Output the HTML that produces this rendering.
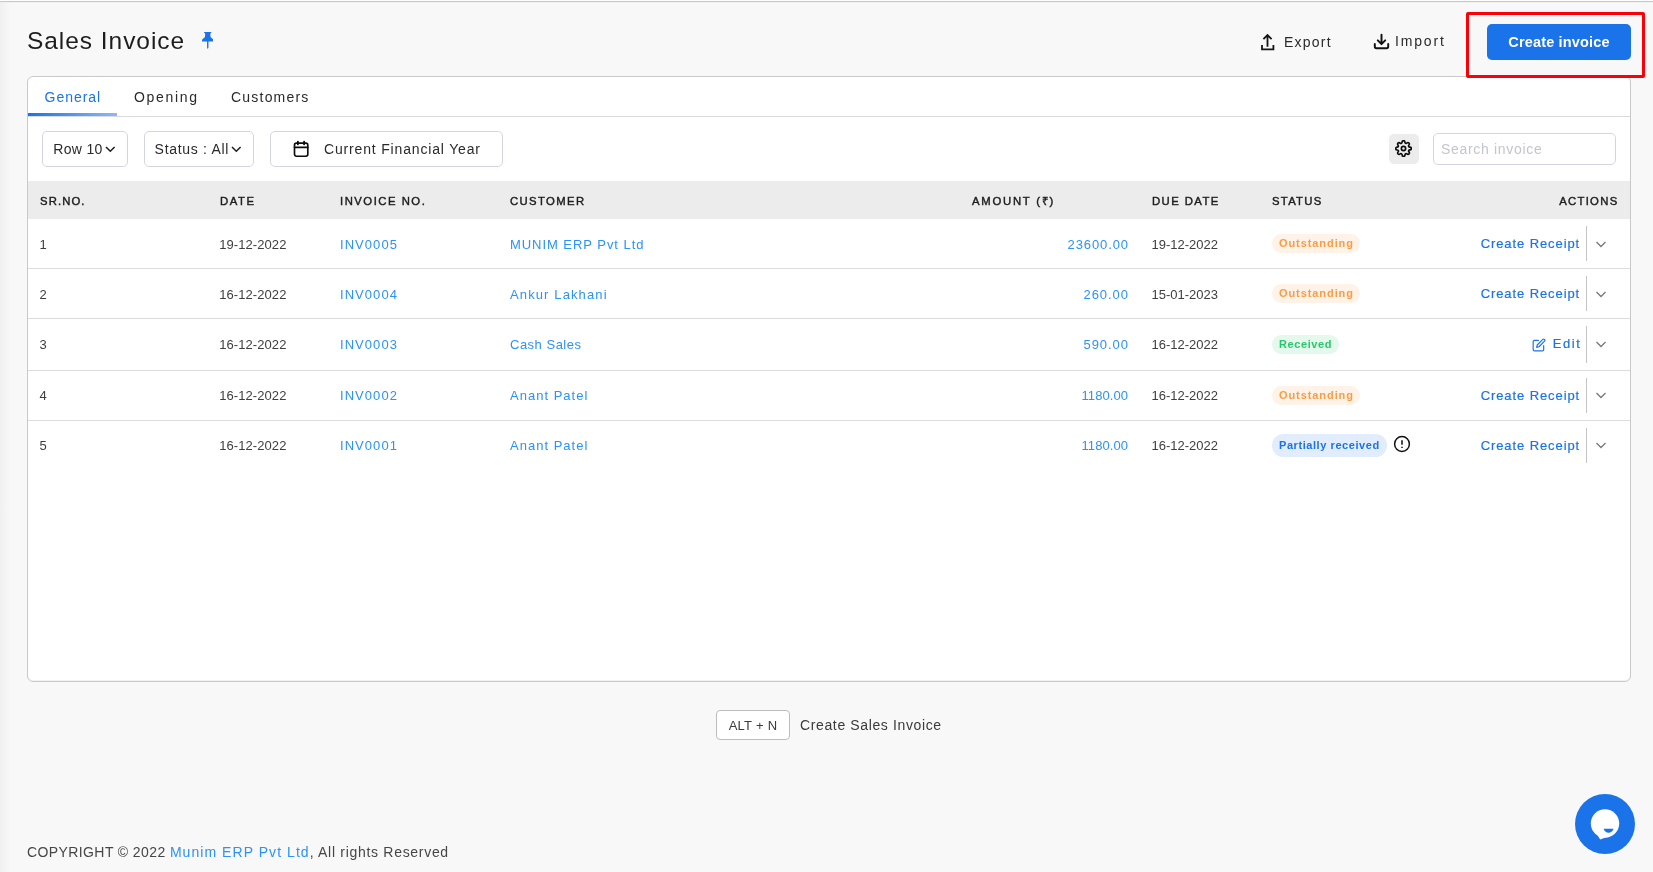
<!DOCTYPE html>
<html lang="en">
<head>
<meta charset="utf-8">
<title>Sales Invoice</title>
<style>
*{box-sizing:border-box;margin:0;padding:0}
html,body{width:1653px;height:872px;overflow:hidden}
body{position:relative;background:#f8f8f8;font-family:"Liberation Sans",sans-serif;color:#222;font-size:13px}
a{text-decoration:none;color:inherit}
#app{position:absolute;left:0;top:0;width:1653px;height:872px;will-change:transform}
.abs{position:absolute;white-space:nowrap}
.topline{left:0;top:0;width:1653px;height:3px;background:linear-gradient(#fdfdfd 0,#fdfdfd 1px,#c9c9c9 1px,#c9c9c9 2px,#f1f1f1 2px,#f1f1f1 3px)}
.leftshade{left:0;top:3px;width:10px;height:869px;background:linear-gradient(90deg,#f0f0f0,#f8f8f8)}
h1{font-weight:400;font-size:24.5px;left:27px;top:26px;line-height:30px;letter-spacing:.95px;color:#1d1d1d}
.hbtn{font-size:14px;line-height:18px;color:#2a2a2a;letter-spacing:.35px}
.create{left:1487px;top:24px;width:144px;height:36px;border-radius:5px;background:#1a73e8;color:#fff;font-weight:700;font-size:14.5px;line-height:36px;text-align:center;letter-spacing:.16px}
.redbox{left:1466px;top:12px;width:179px;height:66px;border:3px solid #fb0007;border-radius:2px}
.card{left:27px;top:76px;width:1604px;height:606px;background:#fff;border:1px solid #c9c9c9;border-radius:6px;box-shadow:inset 0 -1px 0 rgba(0,0,0,.05)}
.tab{font-size:14px;line-height:18px;top:88px;color:#2a2a2a;letter-spacing:.3px}
.tabline{left:28px;top:116px;width:1602px;height:1px;background:#d9d9e0}
.tabbar{left:28px;top:113px;width:89px;height:3px;background:linear-gradient(90deg,#1a73e8,#8db9f4)}
.sel{top:131px;height:36px;border:1px solid #d5d5e2;border-radius:5px;background:#fff;font-size:14px;line-height:34px;color:#2a2a2a;letter-spacing:.3px}
.thead{left:28px;top:181px;width:1602px;height:38px;background:#ececec}
.th{top:194px;font-size:11.300px;line-height:14px;font-weight:400;color:#1c1c1c;-webkit-text-stroke:.42px #1c1c1c;letter-spacing:.75px}
.row{left:28px;width:1602px;border-top:1px solid #dcdcdc}
.row>span,.row>a{position:absolute;white-space:nowrap;font-size:13px;line-height:16px;letter-spacing:.2px}
.c1{left:11.500px;color:#3e3e3e}
.c2{left:191.200px;color:#3e3e3e;letter-spacing:.08px!important}
.c3{left:312px;color:#2b92f7;letter-spacing:1.05px!important}
.c4{left:482px;color:#2b92f7}
.c5{right:502px;color:#2b92f7}
.c6{left:1123.500px;color:#3e3e3e;letter-spacing:0px!important}
.badge{left:1244px;height:19px;border-radius:10px;font-size:11px!important;line-height:19px!important;font-weight:700;padding:0 0 0 7px;letter-spacing:0!important}
.out{width:88px;letter-spacing:.92px!important;background:#fff2e6;color:#fb9c45}
.rec{width:67px;top:16px!important;letter-spacing:.6px!important;background:#e4f8ec;color:#28c76f}
.par{width:115px;height:23px!important;line-height:23px!important;border-radius:12px!important;top:13px!important;letter-spacing:.57px!important;background:#e1edfc;color:#1a73e8}
.act{right:50.800px;color:#1a73e8;-webkit-text-stroke:.18px #1a73e8;font-size:13px!important;letter-spacing:.91px!important;margin-right:-.9px}
.vsep{position:absolute;left:1558px;width:1px;height:35px;background:#c4c4c4}
.r52>.vsep{height:37px}
.chev{position:absolute;left:1567px}

.row>span,.row>a{top:17.500px}
.row.b>span,.row.b>a{top:16.500px}
.row>.act{top:16.500px}
.row>.badge,.row.b>.badge{top:15px}
.row>.vsep{top:7px}
.row>.chev{top:22px}
.row.b>.chev{top:21.300px}
.row>.info{position:absolute;left:1365px;top:14px}
.row>.edi{position:absolute;left:1504px;top:19px}
.kbd{left:716px;top:710px;width:74px;height:30px;border:1px solid #bdbdbd;border-radius:4px;background:#fff;text-align:center;font-size:13px;line-height:29px;color:#3a3a3a;letter-spacing:.27px}
.kbdt{left:800px;top:716px;font-size:14px;line-height:18px;color:#3a3a3a;letter-spacing:.63px}
.foot{left:27px;top:843px;font-size:14px;line-height:18px;color:#464646;letter-spacing:.1px}
.foot a{color:#2b92f7}
.chat{left:1575px;top:794px;width:60px;height:60px;border-radius:50%;background:#1a73e8}
</style>
</head>
<body>
<div id="app">
<div class="abs topline"></div>
<div class="abs leftshade"></div>

<header>
<h1 class="abs">Sales Invoice</h1>
<svg class="abs" style="left:201.800px;top:31.900px" width="11.500" height="17.200" viewBox="0 0 11.500 17.200"><path fill="#1a73e8" d="M2.300 0H9.200Q9.700 .100 9.400 .600L8.300 1.700 8.500 4.600C8.700 5.600 9.600 6.200 10.600 6.700 11.200 7.100 11.500 7.800 11.500 8.600V9.400H6.450V15.600L5.750 17.200 5.050 15.600V9.400H0V8.600C0 7.800 .300 7.100 .900 6.700 1.900 6.200 2.800 5.600 3 4.600L3.200 1.700 2.100 .600Q1.800 .100 2.300 0z"/></svg>

<svg class="abs" style="left:1260px;top:33px" width="15" height="18" viewBox="0 0 15 18" fill="none" stroke="#151515" stroke-width="1.800"><path d="M7.500 13.700V2.300M3.400 6.200 7.500 2.100l4.100 4.100M2 11.900v4.400h11.400v-4.400"/></svg>
<div class="abs hbtn" style="left:1284px;top:33px;letter-spacing:1.23px">Export</div>
<svg class="abs" style="left:1373px;top:33px" width="17" height="17" viewBox="0 0 17 17" fill="none" stroke="#111" stroke-width="1.950" stroke-linecap="round" stroke-linejoin="round"><path d="M8.5 1.8v9M4.8 7.4l3.7 3.7 3.7-3.7M1.8 11v2.6a1.6 1.6 0 0 0 1.6 1.6h10.2a1.6 1.6 0 0 0 1.6-1.6V11"/></svg>
<div class="abs hbtn" style="left:1395px;top:32px;letter-spacing:1.83px">Import</div>

<a class="abs create">Create invoice</a>
</header>

<main>
<div class="abs card"></div>
<div class="abs redbox"></div>
<nav>
<div class="abs tab" style="left:44.600px;color:#1a73e8;letter-spacing:.95px">General</div>
<div class="abs tab" style="left:134px;letter-spacing:1.68px">Opening</div>
<div class="abs tab" style="left:231px;letter-spacing:1.21px">Customers</div>
</nav>
<div class="abs tabline"></div>
<div class="abs tabbar"></div>

<section class="toolbar">
<div class="abs sel" style="left:42px;width:86px;padding-left:10.300px">Row 10<svg style="position:absolute;left:61.800px;top:14.300px" width="11" height="7" viewBox="0 0 11 7" fill="none" stroke="#1d1d1d" stroke-width="1.500"><path d="M1 1l4.300 4.200L9.600 1"/></svg></div>
<div class="abs sel" style="left:144px;width:110px;padding-left:9.600px;letter-spacing:.7px">Status : All<svg style="position:absolute;left:85.700px;top:14.300px" width="11" height="7" viewBox="0 0 11 7" fill="none" stroke="#1d1d1d" stroke-width="1.500"><path d="M1 1l4.300 4.200L9.600 1"/></svg></div>
<div class="abs sel" style="left:270px;width:233px;padding-left:53px;letter-spacing:.83px">Current Financial Year<svg style="position:absolute;left:22px;top:8px" width="17" height="18" viewBox="0 0 17 18" fill="none" stroke="#0c0c0c" stroke-width="1.650" stroke-linecap="round"><rect x="1.500" y="3.100" width="13.300" height="13.100" rx="1.900"/><path d="M1.500 7.400h13.300"/><path d="M4.900 1.700v2.500M11.100 1.700v2.500" stroke-width="1.900"/></svg></div>

<div class="abs" style="left:1389px;top:134px;width:30px;height:30px;border-radius:5px;background:#ececec"></div>
<svg class="abs" style="left:1395px;top:140.100px" width="17" height="17" viewBox="0 0 24 24" fill="none" stroke="#0c0c0c" stroke-width="2.350" stroke-linecap="round" stroke-linejoin="round"><circle cx="12" cy="12" r="3"/><path d="M19.4 15a1.65 1.65 0 0 0 .33 1.82l.06.06a2 2 0 0 1 0 2.83 2 2 0 0 1-2.83 0l-.06-.06a1.65 1.65 0 0 0-1.82-.33 1.65 1.65 0 0 0-1 1.51V21a2 2 0 0 1-2 2 2 2 0 0 1-2-2v-.09A1.65 1.65 0 0 0 9 19.400a1.650 1.650 0 0 0-1.820.330l-.06.06a2 2 0 0 1-2.830 0 2 2 0 0 1 0-2.830l.06-.06a1.650 1.650 0 0 0 .33-1.820 1.650 1.650 0 0 0-1.510-1H3a2 2 0 0 1-2-2 2 2 0 0 1 2-2h.09A1.650 1.650 0 0 0 4.600 9a1.650 1.650 0 0 0-.33-1.820l-.06-.06a2 2 0 0 1 0-2.830 2 2 0 0 1 2.830 0l.06.06a1.650 1.650 0 0 0 1.820.33H9a1.650 1.650 0 0 0 1-1.510V3a2 2 0 0 1 2-2 2 2 0 0 1 2 2v.09a1.650 1.650 0 0 0 1 1.510 1.650 1.650 0 0 0 1.820-.33l.06-.06a2 2 0 0 1 2.830 0 2 2 0 0 1 0 2.830l-.06.06a1.650 1.650 0 0 0-.33 1.820V9a1.650 1.650 0 0 0 1.510 1H21a2 2 0 0 1 2 2 2 2 0 0 1-2 2h-.09a1.650 1.650 0 0 0-1.510 1z"/></svg>
<div class="abs" style="left:1433px;top:133px;width:183px;height:32px;border:1px solid #d5d5e2;border-radius:5px;background:#fff;padding-left:7px;font-size:14px;line-height:31px;color:#c4c4ce;letter-spacing:.68px">Search invoice</div>

</section>
<section class="table" role="table">
<div class="abs thead"></div>
<div class="abs th" style="left:40px;letter-spacing:1.11px">SR.NO.</div>
<div class="abs th" style="left:220px;letter-spacing:1.61px">DATE</div>
<div class="abs th" style="left:340px;letter-spacing:1.51px">INVOICE NO.</div>
<div class="abs th" style="left:510px;letter-spacing:1.38px">CUSTOMER</div>
<div class="abs th" style="left:972px;letter-spacing:1.75px">AMOUNT (₹)</div>
<div class="abs th" style="left:1152px;letter-spacing:1.44px">DUE DATE</div>
<div class="abs th" style="left:1272px;letter-spacing:1.27px">STATUS</div>
<div class="abs th" style="right:34.500px;letter-spacing:1.3px">ACTIONS</div>

<div role="row" class="abs row r50" style="top:218px;height:50px;border-top-color:transparent"><span class="c1">1</span><span class="c2">19-12-2022</span><a class="c3">INV0005</a><a class="c4" style="letter-spacing:0.95px">MUNIM ERP Pvt Ltd</a><a class="c5" style="letter-spacing:0.89px;margin-right:-0.89px">23600.00</a><span class="c6">19-12-2022</span><span class="badge out">Outstanding</span><a class="act">Create Receipt</a><i class="vsep"></i><svg class="chev" width="12" height="7" viewBox="0 0 12 7" fill="none" stroke="#777" stroke-width="1.300"><path d="M1.500 1L6 5.500 10.500 1"/></svg></div>
<div role="row" class="abs row r50" style="top:268px;height:50px"><span class="c1">2</span><span class="c2">16-12-2022</span><a class="c3">INV0004</a><a class="c4" style="letter-spacing:1.12px">Ankur Lakhani</a><a class="c5" style="letter-spacing:0.94px;margin-right:-0.94px">260.00</a><span class="c6">15-01-2023</span><span class="badge out">Outstanding</span><a class="act">Create Receipt</a><i class="vsep"></i><svg class="chev" width="12" height="7" viewBox="0 0 12 7" fill="none" stroke="#777" stroke-width="1.300"><path d="M1.500 1L6 5.500 10.500 1"/></svg></div>
<div role="row" class="abs row r52" style="top:318px;height:52px"><span class="c1">3</span><span class="c2">16-12-2022</span><a class="c3">INV0003</a><a class="c4" style="letter-spacing:0.5px">Cash Sales</a><a class="c5" style="letter-spacing:0.94px;margin-right:-0.94px">590.00</a><span class="c6">16-12-2022</span><span class="badge rec">Received</span><a class="act" style="letter-spacing:1.600px!important;margin-right:-2.300px">Edit</a><svg class="edi" width="14" height="14" viewBox="0 0 24 24" fill="none" stroke="#1a73e8" stroke-width="2" stroke-linecap="round" stroke-linejoin="round"><path d="M11 4H4a2 2 0 0 0-2 2v14a2 2 0 0 0 2 2h14a2 2 0 0 0 2-2v-7"/><path d="M18.500 2.500a2.121 2.121 0 0 1 3 3L12 15l-4 1 1-4 9.500-9.500z"/></svg><i class="vsep"></i><svg class="chev" width="12" height="7" viewBox="0 0 12 7" fill="none" stroke="#777" stroke-width="1.300"><path d="M1.500 1L6 5.500 10.500 1"/></svg></div>
<div role="row" class="abs row r50 b" style="top:370px;height:50px"><span class="c1">4</span><span class="c2">16-12-2022</span><a class="c3">INV0002</a><a class="c4" style="letter-spacing:1.01px">Anant Patel</a><a class="c5" style="letter-spacing:0.08px;margin-right:-0.08px">1180.00</a><span class="c6">16-12-2022</span><span class="badge out">Outstanding</span><a class="act">Create Receipt</a><i class="vsep"></i><svg class="chev" width="12" height="7" viewBox="0 0 12 7" fill="none" stroke="#777" stroke-width="1.300"><path d="M1.500 1L6 5.500 10.500 1"/></svg></div>
<div role="row" class="abs row r50 b" style="top:420px;height:50px"><span class="c1">5</span><span class="c2">16-12-2022</span><a class="c3">INV0001</a><a class="c4" style="letter-spacing:1.01px">Anant Patel</a><a class="c5" style="letter-spacing:0.08px;margin-right:-0.08px">1180.00</a><span class="c6">16-12-2022</span><span class="badge par">Partially received</span><svg class="info" width="18" height="18" viewBox="0 0 18 18" fill="none" stroke="#111" stroke-width="1.500"><circle cx="9" cy="9" r="7.400"/><path d="M9 5.300v4.500M9 11.700v1.200" stroke-width="1.500"/></svg><a class="act">Create Receipt</a><i class="vsep"></i><svg class="chev" width="12" height="7" viewBox="0 0 12 7" fill="none" stroke="#777" stroke-width="1.300"><path d="M1.500 1L6 5.500 10.500 1"/></svg></div>

</section>
</main>
<div class="abs kbd">ALT + N</div>
<div class="abs kbdt">Create Sales Invoice</div>

<footer class="abs foot"><span style="letter-spacing:.4px">COPYRIGHT © 2022 </span><a style="letter-spacing:1.05px">Munim ERP Pvt Ltd</a><span style="letter-spacing:.7px">, All rights Reserved</span></footer>

<div class="abs chat"></div>
<svg class="abs" style="left:1587px;top:806px" width="36" height="36" viewBox="0 0 36 36"><circle cx="18" cy="17.5" r="14.2" fill="#fff"/><path d="M8.500 26L13.200 33.500 26 28.500z" fill="#fff"/><path d="M16.600 22.800h10c-.9 2.800-2.800 4-5 4s-4.100-1.200-5-4z" fill="#1a73e8"/></svg>
</div>
</body>
</html>
